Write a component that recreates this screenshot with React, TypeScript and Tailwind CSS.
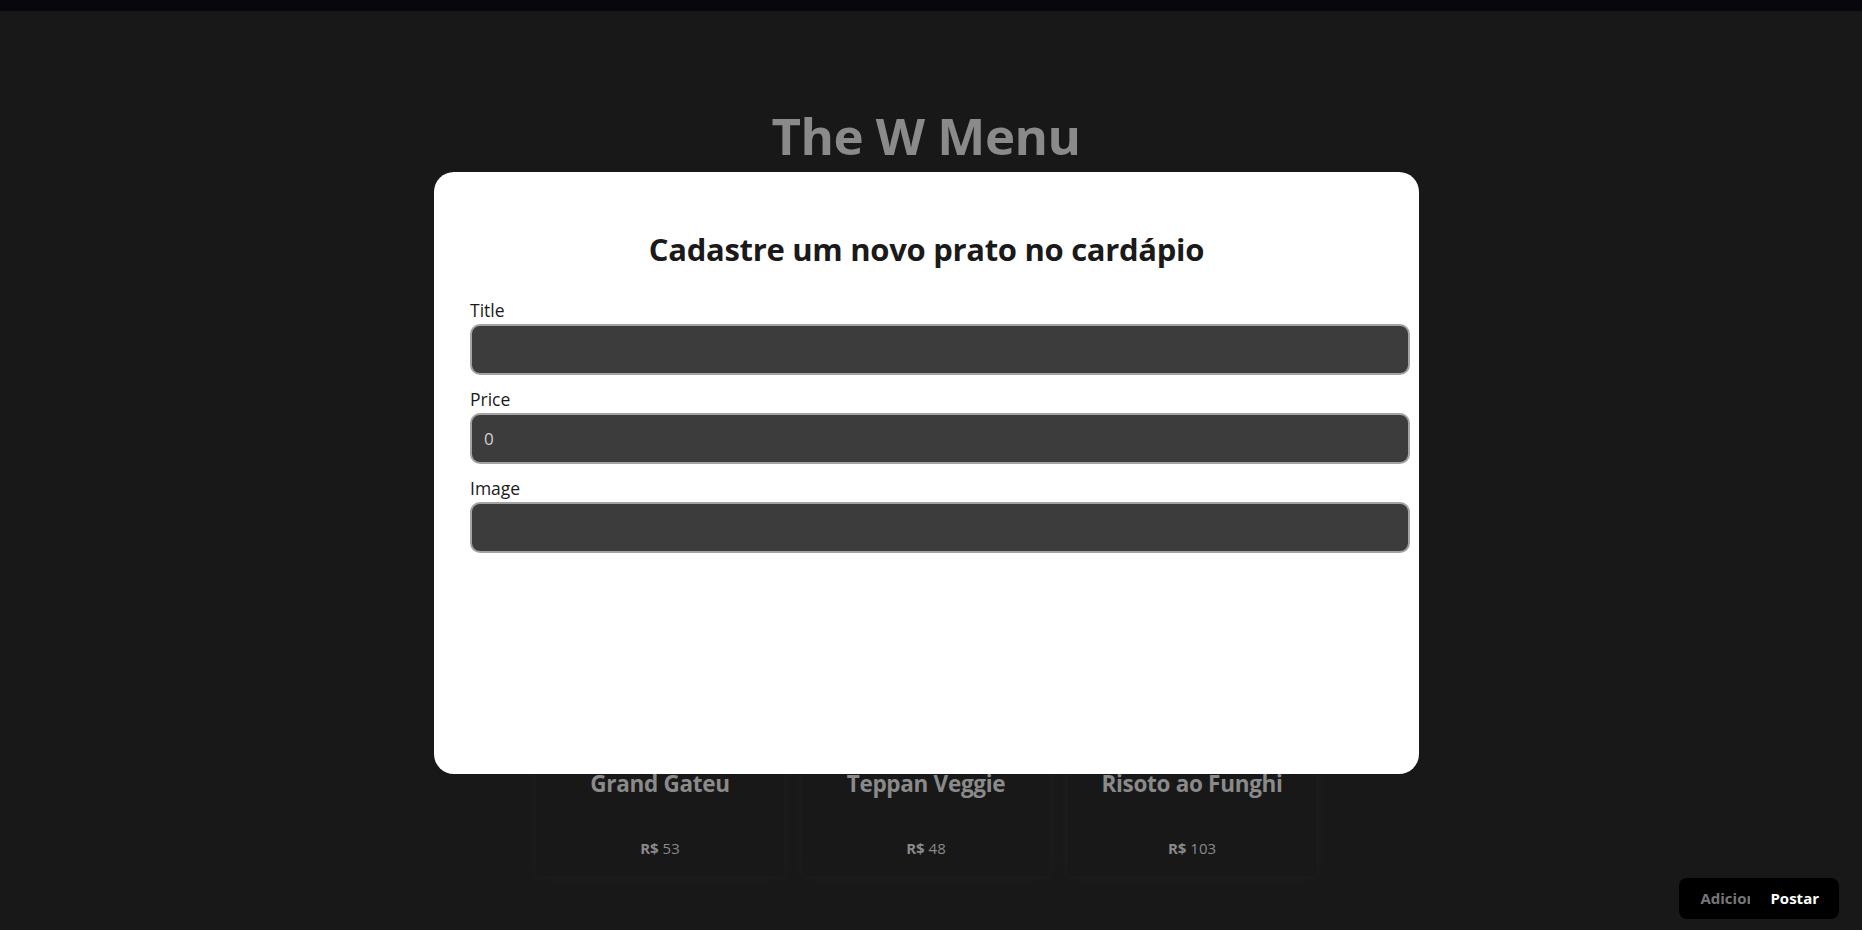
import React from 'react';

interface Dish {
  id: number;
  title: string;
  price: number;
}

const dishes: Dish[] = [
  { id: 1, title: 'Grand Gateu', price: 53 },
  { id: 2, title: 'Teppan Veggie', price: 48 },
  { id: 3, title: 'Risoto ao Funghi', price: 103 },
];

const font = { fontFamily: '"Open Sans", "Noto Sans", sans-serif' };

const Field: React.FC<{ label: string; value?: string }> = ({ label, value }) => (
  <div className="flex flex-col">
    <label className="text-[17.5px] leading-[24px] text-[#1a1a1a] mb-[2px]">{label}</label>
    <input
      readOnly
      value={value ?? ''}
      className="w-[940px] h-[51px] rounded-[10px] border-2 border-[#a3a3a3] bg-[#3c3c3c] px-[12px] text-[17px] text-[#d2d2d2] outline-none"
    />
  </div>
);

const App: React.FC = () => {
  return (
    <div className="relative h-[930px] w-full overflow-hidden bg-[#181818]" style={font}>
      <div className="h-[11px] bg-[#07070d]" />

      <div className="w-[1852px] flex flex-col items-center">
        <h1 className="mt-[92px] text-[51px] leading-[64px] font-bold text-[#8a8a8a] tracking-[-0.5px]">
          The W Menu
        </h1>

        {/* dish cards, mostly under the modal */}
        <div className="mt-[303px] grid grid-cols-3 gap-[18px] p-[14px]">
          {dishes.map(dish => (
            <div
              key={dish.id}
              className="w-[248px] rounded-[6px] bg-[#181818] shadow-[0_0_12px_4px_rgba(255,255,255,0.025)] flex flex-col items-center pt-[16px] pb-[16px]"
            >
              <div className="h-[254px] w-[216px] rounded-[6px] bg-[#202020]" />
              <p className="mt-[14px] text-[22.5px] leading-[32px] font-bold text-[#8a8a8a] tracking-[-0.3px]">
                {dish.title}
              </p>
              <p className="mt-[36px] text-[15px] leading-[24px] text-[#8a8a8a]">
                <span className="font-bold">R$</span> {dish.price}
              </p>
            </div>
          ))}
        </div>
      </div>

      {/* modal */}
      <div className="absolute left-[434px] top-[172px] w-[985px] h-[602px] rounded-[20px] bg-white px-[36px]">
        <h2 className="mt-[57px] text-center text-[31px] leading-[40px] font-bold text-[#1a1a1a] tracking-[-0.3px]">
          Cadastre um novo prato no cardápio
        </h2>
        <div className="mt-[29px] flex flex-col gap-[12px]">
          <Field label="Title" />
          <Field label="Price" value="0" />
          <Field label="Image" />
        </div>
      </div>

      {/* floating action */}
      <div className="absolute right-[23px] bottom-[11px] h-[41px] flex items-center rounded-[8px] bg-black pl-[21px] pr-[20px] text-[15px] font-bold">
        <span className="w-[50px] overflow-hidden whitespace-nowrap text-[#777777]">Adicionar</span>
        <span className="ml-[20px] text-white">Postar</span>
      </div>
    </div>
  );
};

export default App;
